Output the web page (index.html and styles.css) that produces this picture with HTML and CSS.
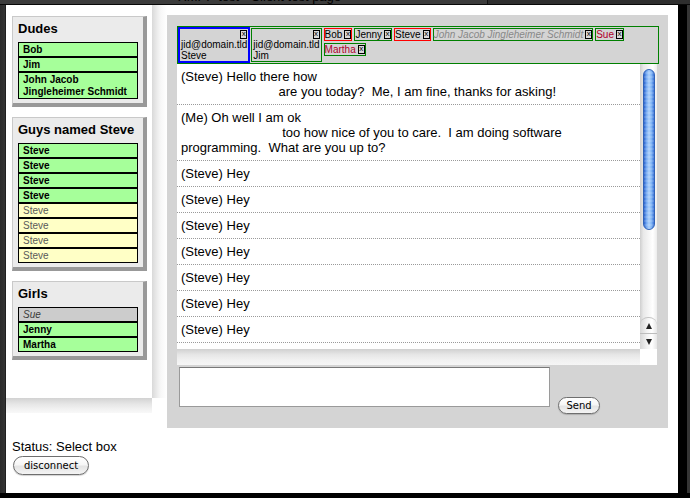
FILE: index.html
```html
<!DOCTYPE html>
<html>
<head>
<meta charset="utf-8">
<title>Client test page</title>
<link rel="stylesheet" href="styles.css">
</head>
<body>
<div class="topbar">
  <div class="tb-tab"><div class="tb-title">XMPP test - Client test page</div></div>
  <div class="tb-rest"></div>
</div>
<div class="frame">
  <div class="edge-l"></div>
  <div class="page">
    <div class="top">
      <div class="sidebar">
        <div class="side-scroll">
          <div class="group">
            <h3>Dudes</h3>
            <ul class="roster">
              <li class="on">Bob</li>
              <li class="on">Jim</li>
              <li class="on">John Jacob<br>Jingleheimer Schmidt</li>
            </ul>
          </div>
          <div class="group">
            <h3>Guys named Steve</h3>
            <ul class="roster">
              <li class="on">Steve</li>
              <li class="on">Steve</li>
              <li class="on">Steve</li>
              <li class="on">Steve</li>
              <li class="off">Steve</li>
              <li class="off">Steve</li>
              <li class="off">Steve</li>
              <li class="off">Steve</li>
            </ul>
          </div>
          <div class="group">
            <h3>Girls</h3>
            <ul class="roster">
              <li class="away">Sue</li>
              <li class="on">Jenny</li>
              <li class="on">Martha</li>
            </ul>
          </div>
        </div>
        <div class="vtrack"></div>
        <div class="htrack"></div>
        <div class="corner"></div>
      </div>
      <div class="main">
        <div class="tabs">
          <div class="tab tall sel"><span class="close">x</span><div class="tl">jid@domain.tld<br>Steve</div></div>
          <div class="tab tall g"><span class="close">x</span><div class="tl">jid@domain.tld<br>Jim</div></div>
          <div class="tab small r"><span class="nm">Bob</span><span class="close">x</span></div>
          <div class="tab small g"><span class="nm">Jenny</span><span class="close">x</span></div>
          <div class="tab small r"><span class="nm">Steve</span><span class="close">x</span></div>
          <div class="tab small g"><span class="nm idle">John Jacob Jingleheimer Schmidt</span><span class="close">x</span></div>
          <div class="tab small g"><span class="nm unread">Sue</span><span class="close">x</span></div>
          <div class="tab small g"><span class="nm unread">Martha</span><span class="close">x</span></div>
        </div>
        <div class="chat">
          <div class="msgs">
            <div class="msg">(Steve) Hello there how
                           are you today?  Me, I am fine, thanks for asking!</div>
            <div class="msg">(Me) Oh well I am ok
                            too how nice of you to care.  I am doing software programming.  What are you up to?</div>
            <div class="msg">(Steve) Hey</div>
            <div class="msg">(Steve) Hey</div>
            <div class="msg">(Steve) Hey</div>
            <div class="msg">(Steve) Hey</div>
            <div class="msg">(Steve) Hey</div>
            <div class="msg">(Steve) Hey</div>
            <div class="msg">(Steve) Hey</div>
          </div>
          <div class="cvtrack">
            <div class="thumb"></div>
            <div class="arrows">
              <div class="arr up"></div>
              <div class="arr down"></div>
            </div>
          </div>
          <div class="chtrack"></div>
          <div class="ccorner"></div>
        </div>
        <div class="compose">
          <textarea class="input"></textarea>
          <button class="btn send">Send</button>
        </div>
      </div>
    </div>
    <div class="status">Status: Select box</div>
    <button class="btn disc">disconnect</button>
  </div>
  <div class="edge-r"></div>
</div>
<div class="bottombar"></div>
</body>
</html>
```

FILE: styles.css
```css
* { box-sizing: border-box; }

html, body {
  margin: 0;
  padding: 0;
}

body {
  width: 690px;
  height: 498px;
  overflow: hidden;
  background: #000;
  font-family: "Liberation Sans", Arial, sans-serif;
  color: #000;
}

/* window chrome */
.topbar {
  display: flex;
  height: 5px;
  border-bottom: 1px solid #080808;
}
.tb-tab {
  width: 488px;
  height: 4px;
  overflow: hidden;
  background: #3c3c3c;
  border-right: 1px solid #111;
}
.tb-title {
  margin-top: -11px;
  padding-left: 178px;
  font-size: 13px;
  line-height: 15px;
  color: #000;
  white-space: nowrap;
}
.tb-rest {
  flex: 1;
  background: #2e2e2e;
}

.frame {
  display: flex;
  height: 488px;
}
.edge-l {
  width: 6px;
  background: linear-gradient(to right, #2a2a2a, #333 80%, #111);
}
.edge-r {
  width: 12px;
  background: linear-gradient(to right, #000 0, #000 9px, #353535 9px);
}
.bottombar {
  height: 5px;
  background: #000;
}

.page {
  width: 672px;
  background: #fff;
}

.top {
  display: flex;
  align-items: flex-start;
}

/* sidebar with aqua scroll tracks */
.sidebar {
  display: grid;
  grid-template-columns: 146px 15px;
  grid-template-rows: 393px 15px;
  width: 161px;
  height: 408px;
}
.side-scroll {
  padding: 11px 0 0 6px;
  overflow: hidden;
  background: #fff;
}
.vtrack {
  background: linear-gradient(to right, #d9d9d9, #ececec 35%, #f8f8f8 60%, #fff);
}
.htrack {
  background: linear-gradient(to bottom, #d2d2d2, #e6e6e6 40%, #f2f2f2 75%, #f8f8f8);
}
.corner {
  background: #fff;
}

.group {
  width: 135px;
  margin-bottom: 10px;
  padding: 0 5px 4px;
  background: #ebebeb;
  border-top: 1px solid #c9c9c9;
  border-left: 1px solid #c9c9c9;
  border-right: 4px solid #999;
  border-bottom: 4px solid #999;
}
.group h3 {
  margin: 4px 0 5px;
  font-size: 13px;
  line-height: 16px;
  font-weight: bold;
}
.roster {
  margin: 0;
  padding: 0;
  list-style: none;
}
.roster li {
  border: 1px solid #000;
  padding: 1px 4px 0;
  font-size: 10px;
  line-height: 12px;
}
.roster li.on {
  background: #a6ff9a;
  font-weight: bold;
}
.roster li.off {
  background: #ffffc6;
  color: #5a5a5a;
}
.roster li.away {
  background: #cccccc;
  color: #3a3a3a;
  font-style: italic;
}

/* main panel */
.main {
  width: 501px;
  height: 413px;
  margin-top: 10px;
  padding: 11px 9px 0 10px;
  background: #d4d4d4;
}

.tabs {
  display: flow-root;
  height: 38px;
  border: 1px solid #008000;
  background: #d4d4d4;
}
.tab {
  float: left;
  box-sizing: content-box;
  margin: 1px;
  border: 1px solid #008000;
  font-size: 10px;
  line-height: 11px;
  white-space: nowrap;
}
.tab.r { border-color: #ff0000; }
.tab.g { border-color: #008000; }
.tab.sel {
  margin: 0;
  border: 2px solid #0000ff;
}
.tab.tall {
  display: flex;
  flex-direction: column;
  height: 32px;
  padding: 0 1px;
}
.tab.tall .close {
  align-self: flex-end;
  margin-top: 1px;
}
.tab.small {
  display: flex;
  align-items: center;
  gap: 2px;
  height: 11px;
}
.close {
  display: block;
  box-sizing: content-box;
  width: 5px;
  height: 7px;
  border: 1px solid #000;
  background: #dadada;
  font-size: 8px;
  line-height: 6px;
  text-align: center;
  color: #000;
}
.nm.idle {
  color: #888;
  font-style: italic;
}
.nm.unread {
  color: #b0002c;
}

/* chat */
.chat {
  display: grid;
  grid-template-columns: 463px 17px;
  grid-template-rows: 285px 16px;
  width: 480px;
  height: 301px;
  background: #fff;
}
.msgs {
  overflow: hidden;
  background: #fff;
}
.msg {
  padding: 5px 4px 5px;
  border-bottom: 1px dotted #9a9a9a;
  font-size: 13px;
  line-height: 15px;
  white-space: pre-wrap;
}
.cvtrack {
  display: flex;
  flex-direction: column;
  justify-content: space-between;
  background: linear-gradient(to right, #cfcfcf, #e9e9e9 20%, #f7f7f7 55%, #fff 75%, #ececec);
}
.thumb {
  width: 12px;
  height: 161px;
  margin: 5px 0 0 3px;
  border: 1px solid #2f62b8;
  border-radius: 6px;
  background:
    repeating-linear-gradient(to bottom, rgba(255,255,255,0) 0, rgba(255,255,255,0) 2px, rgba(255,255,255,.12) 2px, rgba(255,255,255,.12) 4px),
    linear-gradient(to right, #2c63cc, #73a8f2 25%, #aed1fb 50%, #7fb4f5 75%, #3b72d6);
}
.arrows {
  display: flex;
  flex-direction: column;
  background: linear-gradient(to right, #d6d6d6, #f2f2f2 40%, #fff 70%, #e6e6e6);
  border-top: 1px solid #c4c4c4;
  border-radius: 8px 8px 0 0;
}
.arr {
  display: flex;
  align-items: center;
  justify-content: center;
  height: 15px;
}
.arr.down {
  border-top: 1px solid #bdbdbd;
  height: 16px;
}
.arr.up::before {
  content: "";
  border-left: 3px solid transparent;
  border-right: 3px solid transparent;
  border-bottom: 6px solid #222;
}
.arr.down::before {
  content: "";
  border-left: 3px solid transparent;
  border-right: 3px solid transparent;
  border-top: 6px solid #222;
}
.chtrack {
  background: linear-gradient(to bottom, #d0d0d0, #e6e6e6 35%, #f1f1f1 70%, #f6f6f6);
}
.ccorner {
  background: #fff;
}

.compose {
  display: flex;
  align-items: flex-start;
  gap: 8px;
  margin-top: 2px;
  padding-left: 2px;
}
.input {
  width: 371px;
  height: 40px;
  margin: 0;
  padding: 0;
  border: 1px solid #9a9a9a;
  border-top-color: #787878;
  background: #fff;
  resize: none;
  font: 13px "Liberation Sans", Arial, sans-serif;
}

.btn {
  padding: 0;
  margin: 0;
  border: 1px solid #6e6e6e;
  border-radius: 10px;
  background: linear-gradient(to bottom, #ffffff, #f6f6f6 45%, #e4e4e4 55%, #f4f4f4);
  box-shadow: 0 1px 1px rgba(0, 0, 0, 0.18);
  font-family: "DejaVu Sans", "Liberation Sans", sans-serif;
  font-size: 10px;
  line-height: 14px;
  color: #000;
}
.send {
  width: 42px;
  height: 17px;
  margin-top: 30px;
}

.status {
  margin-top: 11px;
  padding-left: 6px;
  font-size: 13px;
  line-height: 15px;
}
.disc {
  display: block;
  width: 76px;
  height: 19px;
  margin: 2px 0 0 7px;
}
```
